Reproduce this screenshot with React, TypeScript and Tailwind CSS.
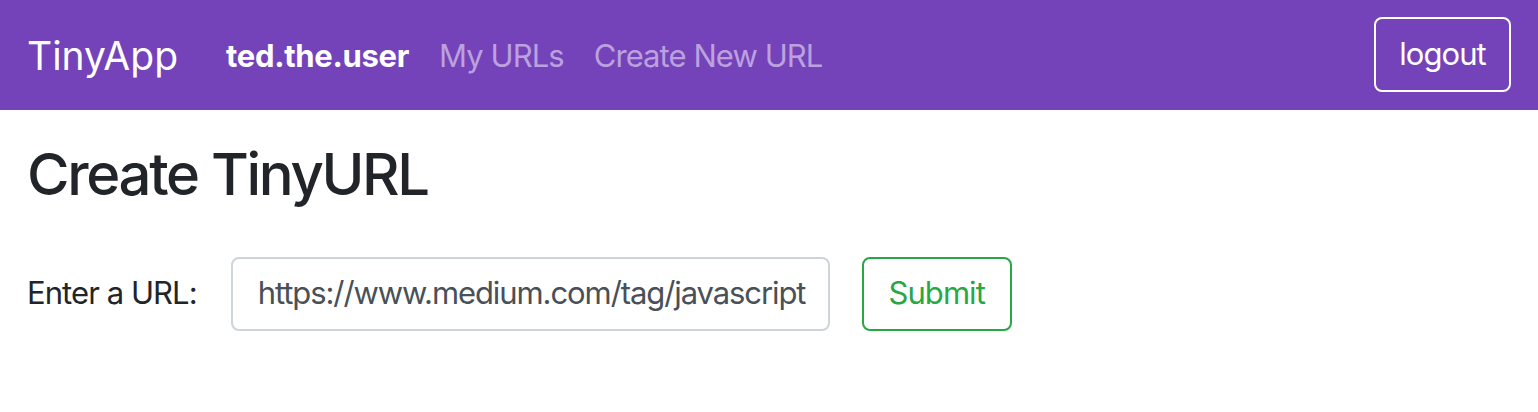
export default function App() {
  return (
    <div className="min-h-[412px] bg-white" style={{ fontFamily: "Inter, 'Noto Sans', sans-serif" }}>
      <nav className="flex h-[110px] items-center bg-[#7443ba] pl-[27px] pr-[27px]">
        <a className="mr-[48px] text-[39px] leading-none text-white">TinyApp</a>
        <div className="flex items-center gap-[30px] text-[31px] leading-none tracking-[-0.03em]">
          <span className="font-bold tracking-[-0.01em] text-white">ted.the.user</span>
          <a className="text-[#bba1de]">My URLs</a>
          <a className="text-[#bba1de]">Create New URL</a>
        </div>
        <button className="mb-[2px] ml-auto flex h-[75px] w-[137px] items-center justify-center rounded-[8px] border-2 border-white text-[31px] tracking-[-0.03em] text-white">
          logout
        </button>
      </nav>
      <main className="px-[27px] pt-[30px]">
        <h2 className="text-[58px] font-medium leading-[1.2] tracking-[-0.04em] text-[#212529]">Create TinyURL</h2>
        <form className="mt-[47px] flex items-center">
          <label className="mr-[34px] text-[31px] tracking-[-0.03em] text-[#212529]">Enter a URL:</label>
          <div className="flex h-[74px] w-[599px] items-center rounded-[8px] border-2 border-[#ced4da] px-[25px] text-[31px] tracking-[-0.035em] text-[#495057]">
            https://www.medium.com/tag/javascript
          </div>
          <button
            type="button"
            className="ml-[32px] flex h-[74px] w-[150px] items-center justify-center rounded-[8px] border-2 border-[#28a745] text-[31px] tracking-[-0.03em] text-[#28a745]"
          >
            Submit
          </button>
        </form>
      </main>
    </div>
  );
}
